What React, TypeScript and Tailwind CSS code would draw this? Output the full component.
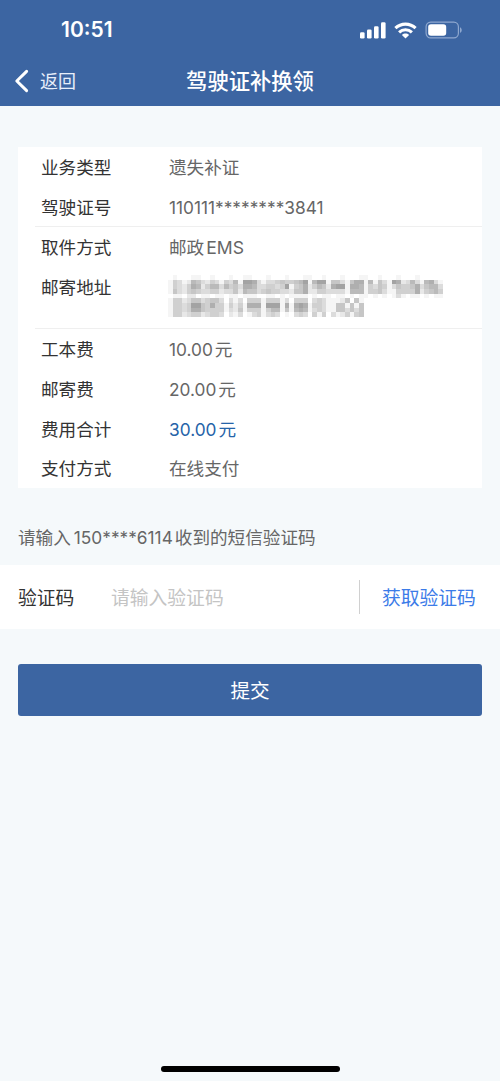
import { useState } from 'react';

interface Field {
  label: string;
  value?: string;
  unit?: string;
  highlight?: boolean;
}

const SECTIONS: Field[][] = [
  [
    { label: '业务类型', value: '遗失补证' },
    { label: '驾驶证号', value: '110111********3841' },
  ],
  [
    { label: '取件方式', value: '邮政', unit: 'EMS' },
    // no value: the address is masked
    { label: '邮寄地址' },
  ],
  [
    { label: '工本费', value: '10.00', unit: '元' },
    { label: '邮寄费', value: '20.00', unit: '元' },
    { label: '费用合计', value: '30.00', unit: '元', highlight: true },
    { label: '支付方式', value: '在线支付' },
  ],
];

// One digit per mosaic cell, 0 = white, 9 = darkest
const MOSAIC = [
  '01000110010001001100010001000110010001000110010001000100000',
  '14312653243143618873133454456816881553157716153187236316731',
  '14324762466364537763344348145724652788177614354135445735663',
  '15324543344233526553454433255722443333166614453114444724564',
  '01102201101101101110011010111101011011010110101013101101011',
  '14423553455303130444144413044403431112505100000000000000000',
  '14434885474414241777188817178714431155151500000000000000000',
  '14434775444413251444146615167613431155353500000000000000000',
  '14423442344302130134134301034304140312414500000000000000000',
];

const FILLS = [
  '#ffffff', '#f5f5f5', '#e8e8e8', '#dcdcdc', '#d0d0d0',
  '#c6c6c6', '#bababa', '#afafaf', '#a3a3a3', '#999999',
];

function MaskedAddress() {
  return (
    <svg
      className="mt-[8px] -ml-px block h-[42px] w-[275px] shrink-0"
      viewBox="0 0 59 9"
      preserveAspectRatio="none"
      shapeRendering="crispEdges"
    >
      {MOSAIC.map((line, y) =>
        line
          .split('')
          .map((d, x) =>
            d === '0' ? null : (
              <rect key={`${x}-${y}`} x={x} y={y} width="1" height="1" fill={FILLS[Number(d)]} />
            ),
          ),
      )}
    </svg>
  );
}

function StatusBar() {
  return (
    <div className="flex h-[56px] items-center justify-between pt-[4px] pr-[37px] pl-[61px]">
      <span className="text-[21px] font-semibold">10:51</span>
      <div className="flex items-center">
        <svg width="26" height="17" viewBox="0 0 26 17" fill="#fff">
          <rect x="0" y="10.2" width="4.6" height="6.3" rx="1.3" />
          <rect x="7" y="7.5" width="4.6" height="9" rx="1.3" />
          <rect x="14" y="4.2" width="4.6" height="12.3" rx="1.3" />
          <rect x="21" y="0.2" width="4.6" height="16.3" rx="1.3" />
        </svg>
        <svg className="ml-[8px]" width="23" height="17" viewBox="0 0 23 17" fill="none">
          <g stroke="#fff" strokeWidth="3.1">
            <path d="M1.4 6.2C7.1.7 15.9.7 21.6 6.2" />
            <path d="M5.1 10.3C8.7 6.9 14.3 6.9 17.9 10.3" />
          </g>
          <path d="M7.9 13C10 11.1 13 11.1 15.1 13L11.5 16.6Z" fill="#fff" />
        </svg>
        <svg className="ml-[8px]" width="38" height="18" viewBox="0 0 38 18" fill="none">
          <rect x="1.1" y="1.1" width="32.3" height="15.8" rx="4.6" stroke="#8fa8cf" strokeWidth="1.2" />
          <rect x="3.2" y="3.2" width="18" height="11.6" rx="2.8" fill="#fff" />
          <path d="M35 6.2C37.3 7.1 37.3 10.9 35 11.8Z" fill="#8fa8cf" />
        </svg>
      </div>
    </div>
  );
}

function NavBar() {
  return (
    <div className="grid h-[50px] grid-cols-[1fr_auto_1fr] items-center">
      <button className="flex items-center pl-[14px] text-[18px] text-[#e8effa]">
        <svg className="mr-[11px]" width="15" height="24" viewBox="0 0 15 24" fill="none">
          <path
            d="M12.6 2.4L2.8 12L12.6 21.6"
            stroke="#fff"
            strokeWidth="3"
            strokeLinecap="round"
            strokeLinejoin="round"
          />
        </svg>
        返回
      </button>
      <h1 className="pt-px text-[21.3px] font-medium">驾驶证补换领</h1>
    </div>
  );
}

function FieldRow({ field }: { field: Field }) {
  return (
    <div className="flex h-[39.8px]">
      <span className="ml-[6px] w-[128px] shrink-0 leading-[41px] text-[#333]">{field.label}</span>
      {field.value ? (
        <span className={`leading-[41px] ${field.highlight ? 'text-[#2563a8]' : 'text-[#666]'}`}>
          <span className={/\d/.test(field.value) ? 'text-[17.3px]' : ''}>{field.value}</span>
          {field.unit && <span className="ml-[2px]">{field.unit}</span>}
        </span>
      ) : (
        <MaskedAddress />
      )}
    </div>
  );
}

export default function App() {
  const [code, setCode] = useState('');

  return (
    <div className="flex h-[1081px] w-[500px] flex-col overflow-hidden bg-[#f5f9fb] font-[Inter,'Noto_Sans_CJK_SC',sans-serif]">
      <header className="h-[106px] shrink-0 bg-[#3c65a2] text-white">
        <StatusBar />
        <NavBar />
      </header>

      <div className="mx-[18px] mt-[41px] h-[341px] shrink-0 bg-white pl-[17px] text-[17.6px]">
        {SECTIONS.map((fields, i) => (
          <div
            key={i}
            className={`${i > 0 ? 'border-t border-[#efefef]' : ''} ${i === 1 ? 'h-[102px]' : ''} ${i === 0 ? 'h-[79px]' : ''}`}
          >
            {fields.map((f) => (
              <FieldRow key={f.label} field={f} />
            ))}
          </div>
        ))}
      </div>

      <p className="mt-[29px] pl-[18px] text-[17.6px] leading-[41px] text-[#666]">
        请输入<span className="mr-[2px] ml-[3px] text-[17.3px]">150****6114</span>收到的短信验证码
      </p>

      <div className="mt-[7px] flex h-[64px] shrink-0 items-center bg-white pl-[18px] text-[18.8px]">
        <label htmlFor="code" className="w-[93px] pt-[4px] text-[#333]">
          验证码
        </label>
        <input
          id="code"
          className="w-[248px] bg-transparent pt-[4px] outline-none placeholder:text-[#c4c4c4]"
          placeholder="请输入验证码"
          value={code}
          onChange={(e) => setCode(e.target.value)}
        />
        <button className="h-[34px] border-l border-[#d0d0d0] pt-[4px] pl-[22px] text-[#3b7be8]">
          获取验证码
        </button>
      </div>

      <button className="mx-[18px] mt-[35px] h-[52px] shrink-0 rounded-[3px] bg-[#3c65a2] pt-[4px] text-[19.6px] text-white">
        提交
      </button>

      <div className="mx-auto mt-auto mb-[9px] h-[6px] w-[179px] shrink-0 rounded-full bg-black" />
    </div>
  );
}
